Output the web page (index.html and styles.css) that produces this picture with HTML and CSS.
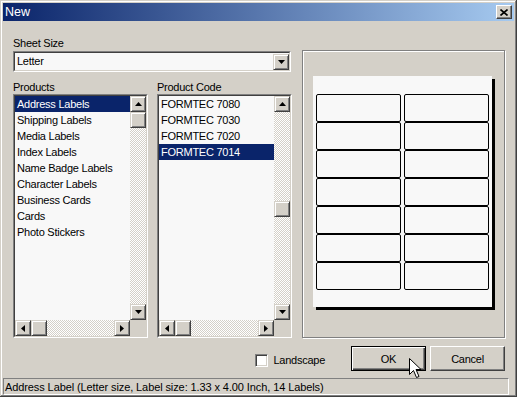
FILE: index.html
```html
<!DOCTYPE html>
<html lang="en">

<head>
    <meta charset="UTF-8">
    <title>New</title>
    <link rel="stylesheet" href="styles.css">
</head>

<body>
    <div class="window">
        <div class="titlebar">
            <span class="title">New</span>
            <button class="close-btn">
                <svg width="8" height="7" viewBox="0 0 8 7"><path d="M0.5 0.5 L7.5 6.5 M7.5 0.5 L0.5 6.5" stroke="#000" stroke-width="1.6"/></svg>
            </button>
        </div>

        <div class="main">
            <div class="left-col">
                <label class="caption">Sheet Size</label>
                <div class="combo">
                    <div class="combo-inner">
                        <span class="combo-text">Letter</span>
                        <span class="sbtn combo-btn">
                            <svg width="7" height="4" viewBox="0 0 7 4"><polygon points="0,0 7,0 3.5,4" fill="#000"/></svg>
                        </span>
                    </div>
                </div>

                <div class="lists">
                    <div class="list-col">
                        <div class="caption">Products</div>
                        <div class="listbox">
                            <div class="listbox-inner">
                                <ul class="items">
                                    <li class="selected">Address Labels</li>
                                    <li>Shipping Labels</li>
                                    <li>Media Labels</li>
                                    <li>Index Labels</li>
                                    <li>Name Badge Labels</li>
                                    <li>Character Labels</li>
                                    <li>Business Cards</li>
                                    <li>Cards</li>
                                    <li>Photo Stickers</li>
                                </ul>
                                <div class="vscroll">
                                    <span class="sbtn"><svg width="7" height="4" viewBox="0 0 7 4"><polygon points="0,4 7,4 3.5,0" fill="#000"/></svg></span>
                                    <span class="sbtn"></span>
                                    <span class="track"></span>
                                    <span class="sbtn"><svg width="7" height="4" viewBox="0 0 7 4"><polygon points="0,0 7,0 3.5,4" fill="#000"/></svg></span>
                                </div>
                                <div class="hscroll">
                                    <span class="sbtn"><svg width="4" height="7" viewBox="0 0 4 7"><polygon points="4,0 4,7 0,3.5" fill="#000"/></svg></span>
                                    <span class="sbtn"></span>
                                    <span class="track"></span>
                                    <span class="sbtn"><svg width="4" height="7" viewBox="0 0 4 7"><polygon points="0,0 0,7 4,3.5" fill="#000"/></svg></span>
                                </div>
                                <div class="corner"></div>
                            </div>
                        </div>
                    </div>

                    <div class="list-col">
                        <div class="caption">Product Code</div>
                        <div class="listbox">
                            <div class="listbox-inner">
                                <ul class="items">
                                    <li>FORMTEC 7080</li>
                                    <li>FORMTEC 7030</li>
                                    <li>FORMTEC 7020</li>
                                    <li class="selected">FORMTEC 7014</li>
                                </ul>
                                <div class="vscroll">
                                    <span class="sbtn"><svg width="7" height="4" viewBox="0 0 7 4"><polygon points="0,4 7,4 3.5,0" fill="#000"/></svg></span>
                                    <span class="sbtn thumb-mid"></span>
                                    <span class="track"></span>
                                    <span class="sbtn"><svg width="7" height="4" viewBox="0 0 7 4"><polygon points="0,0 7,0 3.5,4" fill="#000"/></svg></span>
                                </div>
                                <div class="hscroll">
                                    <span class="sbtn"><svg width="4" height="7" viewBox="0 0 4 7"><polygon points="4,0 4,7 0,3.5" fill="#000"/></svg></span>
                                    <span class="sbtn"></span>
                                    <span class="track"></span>
                                    <span class="sbtn"><svg width="4" height="7" viewBox="0 0 4 7"><polygon points="0,0 0,7 4,3.5" fill="#000"/></svg></span>
                                </div>
                                <div class="corner"></div>
                            </div>
                        </div>
                    </div>
                </div>
            </div>

            <div class="preview">
                <div class="paper">
                    <div class="label-grid">
                        <div class="sheet-label"></div><div class="sheet-label"></div>
                        <div class="sheet-label"></div><div class="sheet-label"></div>
                        <div class="sheet-label"></div><div class="sheet-label"></div>
                        <div class="sheet-label"></div><div class="sheet-label"></div>
                        <div class="sheet-label"></div><div class="sheet-label"></div>
                        <div class="sheet-label"></div><div class="sheet-label"></div>
                        <div class="sheet-label"></div><div class="sheet-label"></div>
                    </div>
                </div>
            </div>
        </div>

        <div class="actions">
            <label class="check">
                <span class="checkbox"></span>
                <span>Landscape</span>
            </label>
            <button class="btn btn-default">OK</button>
            <button class="btn">Cancel</button>
        </div>

        <div class="statusbar">Address Label (Letter size, Label size: 1.33 x 4.00 Inch, 14 Labels)</div>

        <svg class="cursor" width="13" height="21" viewBox="0 0 13 21">
            <path d="M0.5 0.5 L0.5 16.5 L4.5 12.5 L7.5 19.5 L10 18.5 L7 11.5 L12 11.5 Z" fill="#fff" stroke="#000" stroke-width="1"/>
        </svg>
    </div>
</body>

</html>
```

FILE: styles.css
```css
body {
    margin: 0;
    background-color: #d4d0c8;
    font-family: "Liberation Sans", Arial, sans-serif;
    font-size: 11px;
    letter-spacing: -0.25px;
    color: #000;
}

.window {
    position: relative;
    width: 517px;
    height: 397px;
    box-sizing: border-box;
    padding: 3px 3px 2px 3px;
    background-color: #d4d0c8;
    box-shadow: inset -1px -1px #404040, inset 1px 1px #d4d0c8, inset -2px -2px #808080, inset 2px 2px #fff;
    display: flex;
    flex-direction: column;
}

.titlebar {
    height: 18px;
    flex: none;
    background: linear-gradient(to right, #0a246a, #a6caf0);
    display: flex;
    align-items: center;
    justify-content: space-between;
    padding: 0 2px 0 2px;
}

.title {
    color: #fff;
    font-size: 12.5px;
    letter-spacing: 0;
}

.close-btn {
    width: 16px;
    height: 14px;
    padding: 0;
    box-sizing: border-box;
    background-color: #d4d0c8;
    border: 1px solid;
    border-color: #fff #404040 #404040 #fff;
    box-shadow: inset -1px -1px #808080;
    display: flex;
    align-items: center;
    justify-content: center;
}

.main {
    display: flex;
    gap: 10px;
    padding: 16px 9px 0 10px;
}

.left-col {
    width: 279px;
    display: flex;
    flex-direction: column;
}

.caption {
    display: block;
    height: 13px;
    line-height: 13px;
}

/* sunken field */
.combo {
    width: 278px;
    height: 21px;
    margin-top: 1px;
    box-sizing: border-box;
    border: 1px solid;
    border-color: #808080 #fff #fff #808080;
}

.combo-inner {
    height: 100%;
    box-sizing: border-box;
    border: 1px solid;
    border-color: #404040 #d4d0c8 #d4d0c8 #404040;
    background-color: #f8f8f8;
    display: flex;
    align-items: center;
    justify-content: space-between;
}

.combo-text {
    padding-left: 2px;
    line-height: 17px;
}

.combo-btn {
    height: 17px;
}

.lists {
    display: flex;
    gap: 9px;
    margin-top: 9px;
}

.list-col {
    width: 135px;
}

.listbox {
    height: 244px;
    box-sizing: border-box;
    border: 1px solid;
    border-color: #808080 #fff #fff #808080;
}

.listbox-inner {
    height: 100%;
    box-sizing: border-box;
    border: 1px solid;
    border-color: #404040 #d4d0c8 #d4d0c8 #404040;
    background-color: #f8f8f8;
    display: grid;
    grid-template-columns: 1fr 16px;
    grid-template-rows: 1fr 16px;
}

.items {
    list-style: none;
    margin: 0;
    padding: 0;
    overflow: hidden;
}

.items li {
    height: 16px;
    line-height: 16px;
    padding-left: 2px;
    white-space: nowrap;
}

.items li.selected {
    background-color: #0a246a;
    color: #fff;
}

.vscroll,
.hscroll {
    display: flex;
    background-image: repeating-conic-gradient(#d4d0c8 0 25%, #fff 0 50%);
    background-size: 2px 2px;
}

.vscroll {
    flex-direction: column;
}

.track {
    flex: 1;
}

.corner {
    background-color: #d4d0c8;
}

/* raised scroll button */
.sbtn {
    width: 16px;
    height: 16px;
    flex: none;
    box-sizing: border-box;
    background-color: #d4d0c8;
    border: 1px solid;
    border-color: #d4d0c8 #404040 #404040 #d4d0c8;
    box-shadow: inset 1px 1px #fff, inset -1px -1px #808080;
    display: flex;
    align-items: center;
    justify-content: center;
}

.thumb-mid {
    margin-top: 89px;
}

.preview {
    width: 203px;
    height: 288px;
    margin-top: 13px;
    box-sizing: border-box;
    border: 1px solid #808080;
    box-shadow: inset 1px 1px #fff, 1px 1px #fff;
    padding: 25px 0 0 10px;
}

.paper {
    width: 179px;
    box-sizing: border-box;
    padding: 18px 3px 17px 3px;
    background-color: #f8f8f8;
    box-shadow: 3px 3px 0 #000;
}

.label-grid {
    display: grid;
    grid-template-columns: 85px 85px;
    column-gap: 3px;
    grid-auto-rows: 28px;
}

.sheet-label {
    border: 1px solid #000;
    border-radius: 2px;
}

.actions {
    display: flex;
    align-items: flex-start;
    justify-content: flex-end;
    gap: 4px;
    height: 25px;
    margin-top: 8px;
    padding-right: 9px;
}

.check {
    display: flex;
    align-items: center;
    gap: 5px;
    margin-top: 8px;
    margin-right: 22px;
    line-height: 13px;
}

.checkbox {
    width: 13px;
    height: 13px;
    box-sizing: border-box;
    border: 1px solid;
    border-color: #808080 #fff #fff #808080;
    box-shadow: inset 1px 1px #404040, inset -1px -1px #d4d0c8;
    background-color: #fff;
}

.btn {
    width: 75px;
    height: 25px;
    padding: 0;
    box-sizing: border-box;
    font: inherit;
    letter-spacing: inherit;
    color: #000;
    background-color: #d4d0c8;
    border: 1px solid;
    border-color: #fff #404040 #404040 #fff;
    box-shadow: inset -1px -1px #808080;
}

.btn-default {
    border-color: #000;
    box-shadow: inset 1px 1px #fff, inset -1px -1px #404040, inset -2px -2px #808080;
}

.statusbar {
    height: 17px;
    margin-top: 7px;
    margin-right: 5px;
    box-sizing: border-box;
    border: 1px solid;
    border-color: #808080 #fff #fff #808080;
    padding: 1px 0 0 1px;
    line-height: 15px;
    letter-spacing: -0.1px;
    white-space: nowrap;
    overflow: hidden;
}

.cursor {
    position: absolute;
    left: 409px;
    top: 358px;
}
```
